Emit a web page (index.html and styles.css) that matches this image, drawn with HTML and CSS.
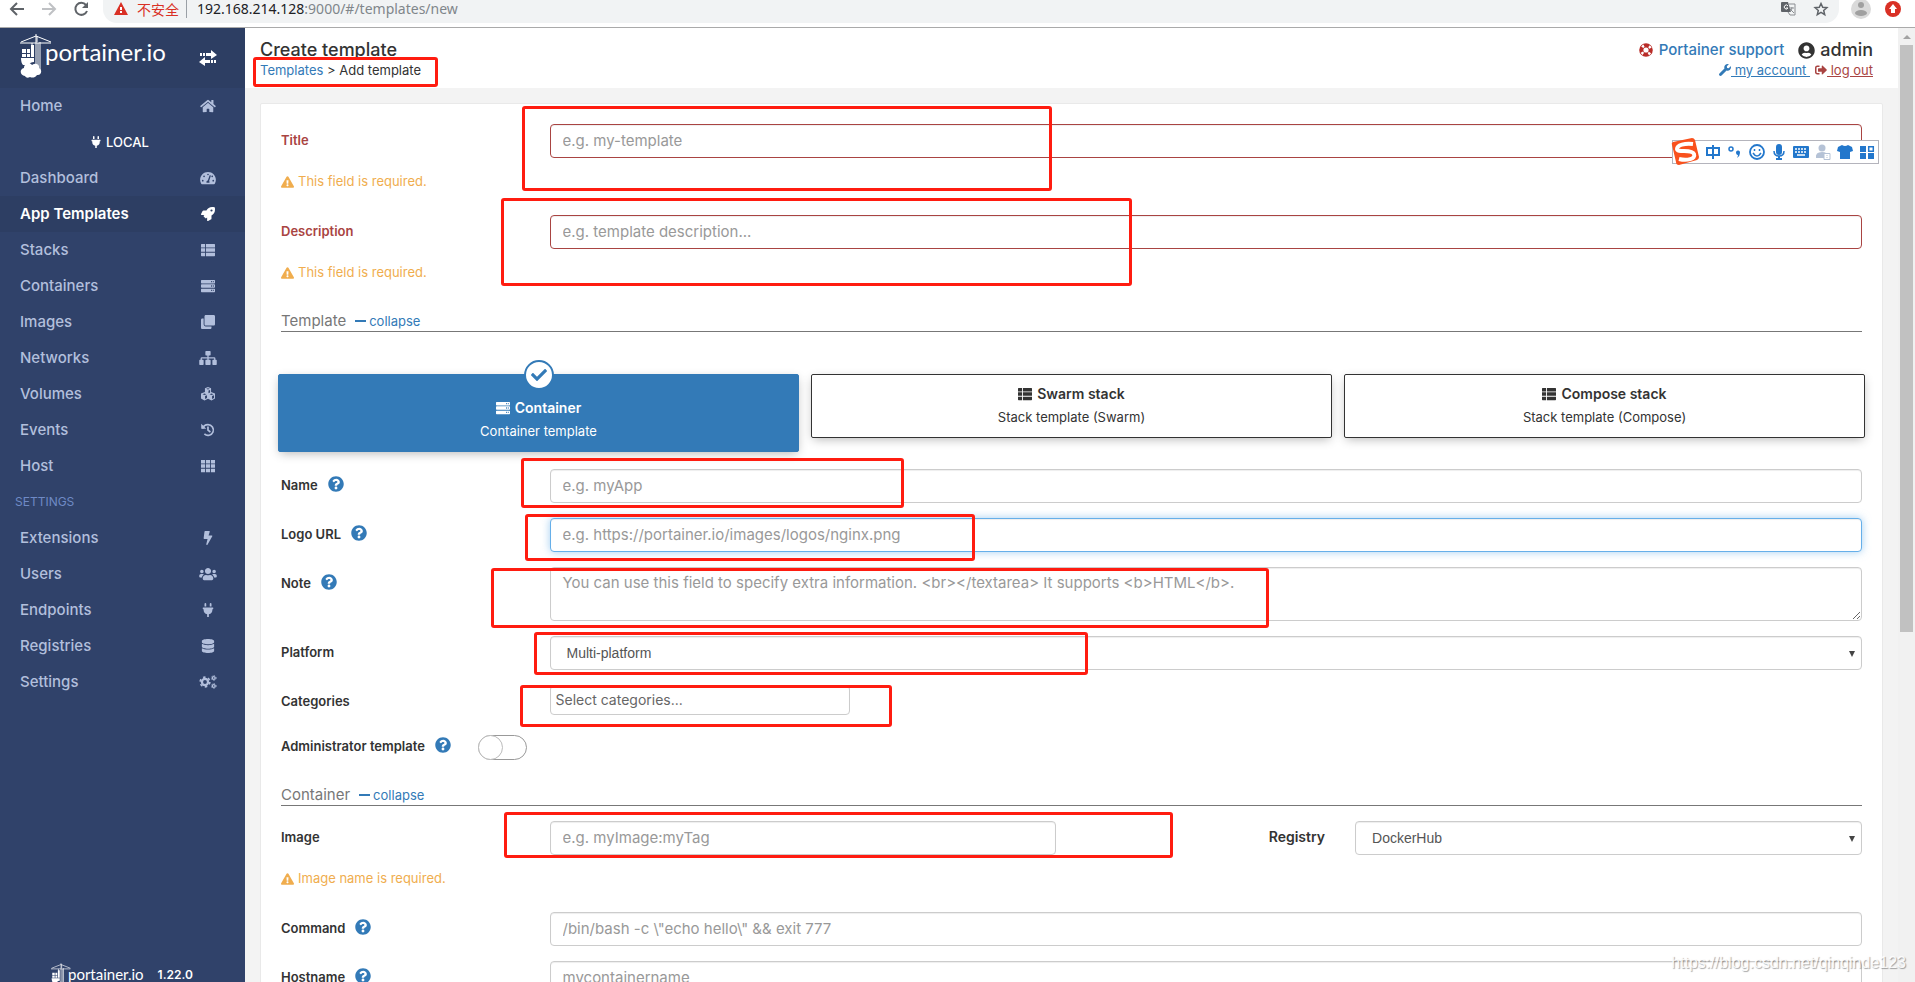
FILE: index.html
```html
<!DOCTYPE html>
<html lang="en">
<head>
<meta charset="utf-8">
<title>Portainer</title>
<link rel="stylesheet" href="styles.css">
</head>
<body>
<svg class="sprite" aria-hidden="true">
  <symbol id="home" viewBox="0 0 576 512"><path d="M280.37 148.26L96 300.11V464a16 16 0 0 0 16 16l112.06-.29a16 16 0 0 0 15.92-16V368a16 16 0 0 1 16-16h64a16 16 0 0 1 16 16v95.64a16 16 0 0 0 16 16.05L464 480a16 16 0 0 0 16-16V300L295.67 148.26a12.19 12.19 0 0 0-15.3 0zM571.6 251.47L488 182.56V44.05a12 12 0 0 0-12-12h-56a12 12 0 0 0-12 12v72.61L318.47 43a48 48 0 0 0-61 0L4.34 251.47a12 12 0 0 0-1.6 16.9l25.5 31A12 12 0 0 0 45.15 301l235.22-193.74a12.19 12.19 0 0 1 15.3 0L530.9 301a12 12 0 0 0 16.9-1.6l25.5-31a12 12 0 0 0-1.7-16.93z"/></symbol>
  <symbol id="gauge" viewBox="0 0 576 512"><path fill-rule="evenodd" d="M288 32C129 32 0 161 0 320c0 53 14 102 39 145 6 9 16 15 27 15h444c11 0 21-6 27-15 25-43 39-92 39-145C576 161 447 32 288 32zM288 96a30 30 0 1 1 0 60 30 30 0 0 1 0-60zM96 384a30 30 0 1 1 0-62 30 30 0 0 1 0 62zm48-160a30 30 0 1 1 0-62 30 30 0 0 1 0 62zm246-42l-62 184c16 17 22 40 13 60H235c-13-30 3-70 47-76l63-184c9-26 54-12 45 16zm48 42a30 30 0 1 1 8-60 30 30 0 0 1-8 60zm42 160a30 30 0 1 1 0-62 30 30 0 0 1 0 62z"/></symbol>
  <symbol id="rocket" viewBox="0 0 512 512"><path d="M505.05 19.1a15.89 15.89 0 0 0-12.2-12.2C460.65 0 435.46 0 410.36 0c-103.2 0-165.1 55.2-211.29 128H94.87A48 48 0 0 0 52 154.49l-49.42 98.8A24 24 0 0 0 24 288h103.77l-22.47 22.47a32 32 0 0 0 0 45.25l50.9 50.91a32 32 0 0 0 45.26 0L224 384.16V488a24 24 0 0 0 34.7 21.49l98.7-49.39a47.91 47.91 0 0 0 26.5-42.9V312.79c72.59-46.3 128-108.4 128-211.09.1-25.2.1-50.4-6.85-82.6zM384 168a40 40 0 1 1 40-40 40 40 0 0 1-40 40z"/></symbol>
  <symbol id="list" viewBox="0 0 512 512"><path d="M0 56q0-24 24-24h126v128H0zM182 32h306q24 0 24 24v104H182zM0 192h150v128H0zM182 192h330v128H182zM0 352h150v128H24q-24 0-24-24zM182 352h330v104q0 24-24 24H182z"/></symbol>
  <symbol id="server" viewBox="0 0 512 512"><path fill-rule="evenodd" d="M24 32h464q24 0 24 24v80q0 24-24 24H24q-24 0-24-24V56q0-24 24-24zm344 40v48h32V72zm64 0v48h32V72zM24 192h464q24 0 24 24v80q0 24-24 24H24q-24 0-24-24v-80q0-24 24-24zm344 40v48h32v-48zm64 0v48h32v-48zM24 352h464q24 0 24 24v80q0 24-24 24H24q-24 0-24-24v-80q0-24 24-24zm344 40v48h32v-48zm64 0v48h32v-48z"/></symbol>
  <symbol id="clone" viewBox="0 0 512 512"><path d="M464 0c26.5 0 48 21.500 48 48v288c0 26.500-21.500 48-48 48H176c-26.500 0-48-21.500-48-48V48c0-26.500 21.500-48 48-48h288M176 416c-44 0-80-36-80-80V128H48c-26.500 0-48 21.500-48 48v288c0 26.500 21.500 48 48 48h288c26.500 0 48-21.500 48-48v-48H176z"/></symbol>
  <symbol id="sitemap" viewBox="0 0 640 512"><path d="M248 0h144q24 0 24 24v112q0 24-24 24h-48v64h200q48 0 48 48v48h24q24 0 24 24v144q0 24-24 24H504q-24 0-24-24V344q0-24 24-24h40v-48H344v48h48q24 0 24 24v144q0 24-24 24H248q-24 0-24-24V344q0-24 24-24h48v-48H96v48h40q24 0 24 24v144q0 24-24 24H24q-24 0-24-24V344q0-24 24-24h24v-48q0-48 48-48h200v-64h-48q-24 0-24-24V24q0-24 24-24z"/></symbol>
  <symbol id="cubes" viewBox="0 0 512 512"><path fill-rule="evenodd" d="M256 0l112 42v140l144 56v180l-128 72-128-62-128 62L0 418V238l144-56V42zm0 42l-66 24 66 26 66-26zM274 130v94l58-26v-88zM128 234l-72 28 72 30 72-30zm256 0l-72 28 72 30 72-30zM148 332v104l72-34V302zm256 0v104l72-36v-98z"/></symbol>
  <symbol id="history" viewBox="0 0 512 512"><path d="M60 205C82 125 160 60 256 60a196 196 0 1 1-132 341" fill="none" stroke="currentColor" stroke-width="62"/><path d="M8 28v160q0 20 20 20h164L8 28zM224 128h62v116l76 62-38 48-100-78z"/></symbol>
  <symbol id="grid" viewBox="0 0 512 512"><path d="M0 32h150v128H0zM182 32h148v128H182zM362 32h150v128H362zM0 192h150v128H0zM182 192h148v128H182zM362 192h150v128H362zM0 352h150v128H0zM182 352h148v128H182zM362 352h150v128H362z"/></symbol>
  <symbol id="bolt" viewBox="0 0 320 512"><path d="M296 160H180.600l42.600-129.800C227.200 15 215.700 0 200 0H56C44 0 33.800 8.900 32.200 20.800l-32 240C-1.700 275.200 9.500 288 24 288h118.700L96.600 482.500c-3.600 15.200 8 29.500 23.300 29.500 8.400 0 16.400-4.400 20.800-12l176-304c9.300-15.900-2.200-36-20.700-36z"/></symbol>
  <symbol id="users" viewBox="0 0 640 512"><path d="M96 224c35.300 0 64-28.700 64-64s-28.700-64-64-64-64 28.700-64 64 28.700 64 64 64zm448 0c35.300 0 64-28.700 64-64s-28.700-64-64-64-64 28.700-64 64 28.700 64 64 64zm32 32h-64c-17.600 0-33.500 7.100-45.100 18.600 40.300 22.100 68.900 62 75.100 109.400h66c17.700 0 32-14.300 32-32v-32c0-35.300-28.700-64-64-64zm-256 0c61.900 0 112-50.100 112-112S381.900 32 320 32 208 82.100 208 144s50.100 112 112 112zm76.800 32h-8.300c-20.800 10-43.900 16-68.500 16s-47.600-6-68.500-16h-8.300C179.600 288 128 339.600 128 403.200V432c0 26.500 21.500 48 48 48h288c26.500 0 48-21.500 48-48v-28.800c0-63.600-51.600-115.200-115.200-115.200zm-223.700-13.400C161.500 263.100 145.600 256 128 256H64c-35.300 0-64 28.700-64 64v32c0 17.700 14.300 32 32 32h65.900c6.300-47.400 34.900-87.300 75.200-109.400z"/></symbol>
  <symbol id="plug" viewBox="0 0 384 512"><path d="M320,32a32,32,0,0,0-64,0v96h64Zm48,128H16A16,16,0,0,0,0,176v32a16,16,0,0,0,16,16H32v32A160.070,160.070,0,0,0,160,412.800V512h64V412.800A160.070,160.070,0,0,0,352,256V224h16a16,16,0,0,0,16-16V176A16,16,0,0,0,368,160ZM128,32a32,32,0,0,0-64,0v96h64Z"/></symbol>
  <symbol id="database" viewBox="0 0 448 512"><path d="M448 73.143v45.714C448 159.143 347.667 192 224 192S0 159.143 0 118.857V73.143C0 32.857 100.333 0 224 0s224 32.857 224 73.143zM448 176v102.857C448 319.143 347.667 352 224 352S0 319.143 0 278.857V176c48.125 33.143 136.208 48.572 224 48.572S399.874 209.143 448 176zm0 160v102.857C448 479.143 347.667 512 224 512S0 479.143 0 438.857V336c48.125 33.143 136.208 48.572 224 48.572S399.874 369.143 448 336z"/></symbol>
  <symbol id="cogs" viewBox="0 0 640 512"><g fill="none" stroke="currentColor"><circle cx="210" cy="256" r="112" stroke-width="84"/><circle cx="210" cy="256" r="176" stroke-width="60" stroke-dasharray="92 92"/><circle cx="530" cy="110" r="52" stroke-width="46"/><circle cx="530" cy="110" r="86" stroke-width="34" stroke-dasharray="45 45"/><circle cx="530" cy="402" r="52" stroke-width="46"/><circle cx="530" cy="402" r="86" stroke-width="34" stroke-dasharray="45 45"/></g></symbol>
  <symbol id="help" viewBox="0 0 512 512"><path d="M504 256c0 136.997-111.043 248-248 248S8 392.997 8 256C8 119.083 119.043 8 256 8s248 111.083 248 248zM262.655 90c-54.497 0-89.255 22.957-116.549 63.758-3.536 5.286-2.353 12.415 2.715 16.258l34.699 26.310c5.205 3.947 12.621 3.008 16.665-2.122 17.864-22.658 30.113-35.797 57.303-35.797 20.429 0 45.698 13.148 45.698 32.958 0 14.976-12.363 22.667-32.534 33.976C247.128 238.528 216 254.941 216 296v4c0 6.627 5.373 12 12 12h56c6.627 0 12-5.373 12-12v-1.333c0-28.462 83.186-29.647 83.186-106.667 0-58.002-60.165-102-116.531-102zM256 338c-25.365 0-46 20.635-46 46 0 25.364 20.635 46 46 46s46-20.636 46-46c0-25.365-20.635-46-46-46z"/></symbol>
  <symbol id="warn" viewBox="0 0 576 512"><path d="M569.517 440.013C587.975 472.007 564.806 512 527.940 512H48.054c-36.937 0-59.999-40.055-41.577-71.987L246.423 23.985c18.467-32.009 64.720-31.951 83.154 0l239.940 416.028zM288 354c-25.405 0-46 20.595-46 46s20.595 46 46 46 46-20.595 46-46-20.595-46-46-46zm-43.673-165.346l7.418 136c.347 6.364 5.609 11.346 11.982 11.346h48.546c6.373 0 11.635-4.982 11.982-11.346l7.418-136c.375-6.874-5.098-12.654-11.982-12.654h-63.383c-6.884 0-12.356 5.780-11.981 12.654z"/></symbol>
  <symbol id="user" viewBox="0 0 496 512"><path d="M248 8C111 8 0 119 0 256s111 248 248 248 248-111 248-248S385 8 248 8zm0 96c48.600 0 88 39.400 88 88s-39.400 88-88 88-88-39.400-88-88 39.400-88 88-88zm0 344c-58.700 0-111.300-26.600-146.500-68.200 18.800-35.400 55.600-59.800 98.500-59.800 2.400 0 4.800.400 7.100 1.100 13 4.200 26.600 6.900 40.900 6.900 14.300 0 28-2.700 40.900-6.900 2.300-.700 4.700-1.100 7.100-1.100 42.900 0 79.700 24.400 98.500 59.800C359.300 421.400 306.700 448 248 448z"/></symbol>
  <symbol id="wrench" viewBox="0 0 512 512"><path d="M507.730 109.100c-2.240-9.030-13.540-12.090-20.120-5.510l-74.360 74.360-67.880-11.310-11.310-67.880 74.360-74.360c6.620-6.620 3.430-17.900-5.660-20.160-47.380-11.740-99.550.910-136.580 37.930-39.640 39.640-50.550 97.100-34.050 147.200L18.740 402.760c-24.990 24.990-24.990 65.510 0 90.500 24.990 24.990 65.510 24.990 90.500 0l213.210-213.210c50.120 16.710 107.470 5.680 147.370-34.220 37.070-37.070 49.700-89.320 37.910-136.730z"/></symbol>
  <symbol id="logout" viewBox="0 0 512 512"><path d="M497 273L329 441c-15 15-41 4.500-41-17v-96H152c-13.300 0-24-10.700-24-24v-96c0-13.300 10.700-24 24-24h136V88c0-21.400 25.900-32 41-17l168 168c9.300 9.400 9.300 24.600 0 34zM192 436v-40c0-6.600-5.400-12-12-12H96c-17.700 0-32-14.300-32-32V160c0-17.700 14.300-32 32-32h84c6.600 0 12-5.400 12-12V76c0-6.600-5.400-12-12-12H96c-53 0-96 43-96 96v192c0 53 43 96 96 96h84c6.600 0 12-5.400 12-12z"/></symbol>
  <symbol id="check" viewBox="0 0 512 512"><path d="M173.898 439.404l-166.400-166.400c-9.997-9.997-9.997-26.206 0-36.204l36.203-36.204c9.997-9.998 26.207-9.998 36.204 0L192 312.690 432.095 72.596c9.997-9.997 26.207-9.997 36.204 0l36.203 36.204c9.997 9.997 9.997 26.206 0 36.204l-294.400 294.401c-9.998 9.997-26.207 9.997-36.204-.001z"/></symbol>
  <symbol id="lifering" viewBox="0 0 14 14"><circle cx="7" cy="7" r="4.700" fill="none" stroke="#b92c28" stroke-width="4.200"/><circle cx="7" cy="7" r="4.700" fill="none" stroke="#fff" stroke-width="2.600" stroke-dasharray="2.200 5.180" stroke-dashoffset="-2.600"/></symbol>
  <symbol id="crane" viewBox="0 0 32 44"><g fill="none" stroke="#fff"><path d="M0 9h31M1 8L16 2l15 6M16 0v30M20 8v28M17 2v6M12 9v5"/><path d="M18 9v27" stroke-width="1"/></g><path fill="#fff" d="M11 11h3v4h-3zM2 15h4v4H2zM7 15h3v4H7zM2 20h4v3H2zM7 20h3v3H7zM11 15h3v8h-3zM1 24h13v4q-4 0-5 3H3q-2-2-2-7z"/><path fill="#fff" d="M5 42c-5 0-6-7-1-8 0-5 6-6 8-3 4-3 8 0 7 3 4 2 2 8-2 7-2 3-5 3-7 2-2 1-4 1-5-1z"/></symbol>
</svg>

<div class="window">
  <header class="browser">
    <svg class="nav-arrows" viewBox="0 0 90 20"><g fill="none" stroke-width="2"><path stroke="#5f6368" d="M24 9H11M17 3l-6 6 6 6"/><path stroke="#bfc1c4" d="M42 9h13M49 3l6 6-6 6"/><path stroke="#5f6368" d="M87 11a6 6 0 1 1-1-6"/></g><path fill="#5f6368" d="M88 2v6h-6z"/></svg>
    <div class="address">
      <svg class="alert" viewBox="0 0 14 13"><path fill="#d93025" d="M7 0l7 13H0z"/><path fill="#fff" d="M6 5h2v3H6zM6 9h2v2H6z"/></svg>
      <span class="unsafe">不安全</span>
      <span class="url"><b>192.168.214.128</b>:9000/#/templates/new</span>
      <svg class="translate" viewBox="0 0 15 15"><path fill="#5f6368" d="M1 1h6l3 10H1q-1 0-1-1V2q0-1 1-1z"/><path fill="none" stroke="#8a8d91" d="M8 3h6v11H9l-2-3M8 7h5M11 6q0 3-2 5M9 8l4 4"/><path fill="none" stroke="#fff" d="M7 5a2 2 0 1 0 0 2H5"/></svg>
      <svg class="star" viewBox="0 0 14 14"><path fill="none" stroke="#5f6368" stroke-width="1.500" d="M7 1.500l1.700 3.800 4.200.4-3.200 2.800 1 4.100L7 10.400l-3.700 2.200 1-4.100L1.100 5.700l4.200-.4z"/></svg>
    </div>
    <svg class="avatar" viewBox="0 0 20 20"><circle cx="10" cy="10" r="10" fill="#dadada"/><circle cx="10" cy="6" r="3" fill="#a0a0a0"/><ellipse cx="10" cy="14" rx="6" ry="3" fill="#a0a0a0"/></svg>
    <svg class="update" viewBox="0 0 16 16"><circle cx="8" cy="8" r="8" fill="#d93025"/><path fill="#fff" d="M8 3l4 5h-2v4H6V8H4z"/></svg>
  </header>

  <div class="app">
    <nav class="sidebar">
      <div class="brand">
        <svg class="crane"><use href="#crane"/></svg>
        <span class="brand-name">portainer.io</span>
        <svg class="toggle-menu" viewBox="0 0 18 16"><path fill="#fff" d="M1 3h2v3H1zM4 3h2v3H4zM7 3h5V0l6 5-6 4V6H7zM17 10h-2v3h2zM14 10h-2v3h2zM11 10H6V7l-6 5 6 4v-3h5z"/></svg>
      </div>
      <a class="item" href="#">Home<svg><use href="#home"/></svg></a>
      <div class="endpoint"><svg><use href="#plug"/></svg>LOCAL</div>
      <a class="item" href="#">Dashboard<svg><use href="#gauge"/></svg></a>
      <a class="item active" href="#">App Templates<svg><use href="#rocket"/></svg></a>
      <a class="item" href="#">Stacks<svg><use href="#list"/></svg></a>
      <a class="item" href="#">Containers<svg><use href="#server"/></svg></a>
      <a class="item" href="#">Images<svg><use href="#clone"/></svg></a>
      <a class="item" href="#">Networks<svg><use href="#sitemap"/></svg></a>
      <a class="item" href="#">Volumes<svg><use href="#cubes"/></svg></a>
      <a class="item" href="#">Events<svg><use href="#history"/></svg></a>
      <a class="item" href="#">Host<svg><use href="#grid"/></svg></a>
      <div class="nav-title">SETTINGS</div>
      <a class="item" href="#">Extensions<svg><use href="#bolt"/></svg></a>
      <a class="item" href="#">Users<svg><use href="#users"/></svg></a>
      <a class="item" href="#">Endpoints<svg><use href="#plug"/></svg></a>
      <a class="item" href="#">Registries<svg><use href="#database"/></svg></a>
      <a class="item" href="#">Settings<svg><use href="#cogs"/></svg></a>
      <div class="side-foot"><svg class="crane-small"><use href="#crane"/></svg><span class="foot-name">portainer.io</span><span class="version">1.22.0</span></div>
    </nav>

    <main class="content">
      <header class="page-head">
        <div>
          <h1>Create template</h1>
          <div class="crumbs"><a href="#">Templates</a> &gt; Add template</div>
        </div>
        <div class="account">
          <div class="account-top"><a class="support" href="#"><svg><use href="#lifering"/></svg>Portainer support</a><span class="admin"><svg><use href="#user"/></svg>admin</span></div>
          <div class="account-links"><a class="mine" href="#"><svg><use href="#wrench"/></svg><span>&nbsp;my account&nbsp;</span></a><a class="leave" href="#"><svg><use href="#logout"/></svg><span>&nbsp;log out</span></a></div>
        </div>
      </header>

      <form class="card">
        <div class="row invalid"><label class="c2" for="title">Title</label><div class="c10"><input id="title" type="text" placeholder="e.g. my-template"></div></div>
        <p class="warning"><svg><use href="#warn"/></svg>This field is required.</p>
        <div class="row invalid"><label class="c2" for="desc">Description</label><div class="c10"><input id="desc" type="text" placeholder="e.g. template description..."></div></div>
        <p class="warning"><svg><use href="#warn"/></svg>This field is required.</p>

        <h2>Template<a href="#"><i></i>collapse</a></h2>

        <div class="boxes">
          <button type="button" class="box selected"><span class="tick"><svg><use href="#check"/></svg></span><strong><svg><use href="#server"/></svg>Container</strong><span>Container template</span></button>
          <button type="button" class="box"><strong><svg><use href="#list"/></svg>Swarm stack</strong><span>Stack template (Swarm)</span></button>
          <button type="button" class="box"><strong><svg><use href="#list"/></svg>Compose stack</strong><span>Stack template (Compose)</span></button>
        </div>

        <div class="row"><label class="c2" for="name">Name<svg><use href="#help"/></svg></label><div class="c10"><input id="name" type="text" placeholder="e.g. myApp"></div></div>
        <div class="row"><label class="c2" for="logo">Logo URL<svg><use href="#help"/></svg></label><div class="c10"><input id="logo" class="focused" type="text" placeholder="e.g. https://portainer.io/images/logos/nginx.png"></div></div>
        <div class="row"><label class="c2" for="note">Note<svg><use href="#help"/></svg></label><div class="c10"><textarea id="note" placeholder="You can use this field to specify extra information. &lt;br&gt;&lt;/textarea&gt; It supports &lt;b&gt;HTML&lt;/b&gt;."></textarea></div></div>
        <div class="row"><label class="c2" for="platform">Platform</label><div class="c10 select"><select id="platform"><option>Multi-platform</option></select></div></div>
        <div class="row"><label class="c2" for="cats">Categories</label><div class="c10"><input id="cats" class="multi" type="text" placeholder="Select categories..."></div></div>
        <div class="row admin-row"><label for="adm">Administrator template<svg><use href="#help"/></svg></label><input id="adm" class="switch" type="checkbox"></div>

        <h2>Container<a href="#"><i></i>collapse</a></h2>

        <div class="row image-row"><label class="c2" for="image">Image</label><div class="c4"><input id="image" type="text" placeholder="e.g. myImage:myTag"></div><label class="c2 end" for="registry">Registry</label><div class="c4 select"><select id="registry"><option>DockerHub</option></select></div></div>
        <p class="warning"><svg><use href="#warn"/></svg>Image name is required.</p>
        <div class="row"><label class="c2" for="cmd">Command<svg><use href="#help"/></svg></label><div class="c10"><input id="cmd" type="text" placeholder="/bin/bash -c \&quot;echo hello\&quot; &amp;&amp; exit 777"></div></div>
        <div class="row"><label class="c2" for="host">Hostname<svg><use href="#help"/></svg></label><div class="c10"><input id="host" type="text" placeholder="mycontainername"></div></div>
      </form>
    </main>

    <div class="scrollbar"><i class="up"></i><i class="thumb"></i></div>
  </div>
</div>

<div class="mark m1"></div><div class="mark m2"></div><div class="mark m3"></div><div class="mark m4"></div><div class="mark m5"></div><div class="mark m6"></div><div class="mark m7"></div><div class="mark m8"></div><div class="mark m9"></div>

<div class="ime">
  <svg class="ime-logo" viewBox="0 0 28 28"><path fill="#f9511d" d="M1 7Q0 5 2 4L21 0q2 0 3 2l4 17q0 2-2 3L8 27q-3 0-3-3z"/><path fill="none" stroke="#fff" stroke-width="4" d="M22 6C14 5 6 7 6 11s15 0 17 5-7 7-15 5"/></svg>
  <svg viewBox="0 0 16 16"><path fill="none" stroke="#2277cc" stroke-width="2" d="M2 4h12v7H2zM8 1v14"/></svg>
  <svg viewBox="0 0 16 16"><circle cx="4" cy="5" r="2" fill="none" stroke="#2277cc" stroke-width="1.500"/><path fill="#2277cc" d="M9 8a2 2 0 1 1 4 1q0 3-3 5 1-2 1-3-2 0-2-3z"/></svg>
  <svg viewBox="0 0 16 16"><g fill="none" stroke="#2277cc"><circle cx="8" cy="8" r="7" stroke-width="1.800"/><path stroke-width="1.500" d="M4 9q4 6 8 0M5.500 5v2M10.500 5v2"/></g></svg>
  <svg viewBox="0 0 16 16"><path fill="#2277cc" d="M5 3a3 3 0 0 1 6 0v5a3 3 0 0 1-6 0zM5 14h6v2H5zM7 12h2v3H7z"/><path fill="none" stroke="#2277cc" stroke-width="1.500" d="M3 7q0 5 5 5t5-5"/></svg>
  <svg viewBox="0 0 16 16"><rect y="2" width="16" height="12" rx="1" fill="#2277cc"/><path stroke="#fff" stroke-width="1.500" d="M2 5h12M2 8h12" stroke-dasharray="2 1"/><path stroke="#fff" stroke-width="1.500" d="M4 11h8"/></svg>
  <svg viewBox="0 0 16 16"><g fill="#b5c2d6"><circle cx="7" cy="4" r="3.500"/><path d="M1 14q-1-6 6-6 3 0 4 1H9v5z"/></g><path fill="#fff" stroke="#b5c2d6" d="M9 9.500h6v6H9z"/><path stroke="#b5c2d6" d="M12 11v1M12 13v1"/></svg>
  <svg viewBox="0 0 16 16"><path fill="#2277cc" d="M5 1q3 2 6 0l4 2 1 4-3 1v7H3V8L0 7l1-4z"/></svg>
  <svg viewBox="0 0 16 16"><path fill="#2277cc" d="M1 2h6v6H1zM1 9h6v6H1zM9 9h6v6H9z"/><path fill="none" stroke="#2277cc" stroke-width="1.500" d="M9.700 2.700h4.600v4.600H9.700z"/></svg>
</div>
<div class="watermark">https://blog.csdn.net/qinqinde123</div>
</body>
</html>
```
FILE: styles.css
```css
* { box-sizing: border-box; }
body { margin: 0; font: 13px/18px Inter, "Liberation Sans", sans-serif; color: #333; background: #f3f3f3; overflow: hidden; }
svg { fill: currentColor; flex: none; overflow: visible; }
a { color: #337ab7; text-decoration: none; }
.sprite { position: absolute; width: 0; height: 0; }
.window { height: 100vh; display: flex; flex-direction: column; overflow: hidden; }

.browser { flex: none; height: 28px; display: flex; align-items: flex-start; background: #fff; border-bottom: 1px solid #aaa; }
.nav-arrows { width: 90px; height: 20px; }
.address { flex: 1; display: flex; align-items: center; height: 23px; margin-left: 13px; padding: 0 11px 6px 11px; background: #f1f3f4; border-radius: 0 0 14px 14px; }
.alert { width: 14px; height: 13px; margin-right: 9px; }
.unsafe { font: 14px/18px "Noto Sans CJK SC", sans-serif; color: #d93025; padding-right: 7px; border-right: 1px solid #9aa0a6; }
.url { flex: 1; margin-left: 10px; font: 14px/18px "Noto Sans", sans-serif; color: #80868b; }
.url b { font-weight: 400; color: #202124; }
.translate { width: 15px; height: 15px; margin-right: 18px; }
.star { width: 14px; height: 14px; }
.avatar { width: 20px; height: 20px; margin: -1px 14px 0 12px; }
.update { width: 16px; height: 16px; margin: 1px 14px 0 0; }

.app { flex: 1; min-height: 0; display: flex; }
.sidebar { flex: none; width: 245px; display: flex; flex-direction: column; background: #30426a; color: #b2bfdc; font-size: 15px; font-weight: 500; }
.brand { height: 60px; display: flex; align-items: flex-start; padding: 6px 28px 0 20px; background: #2d3e63; color: #fff; }
.crane { width: 32px; height: 44px; }
.brand-name { flex: 1; margin-left: -7px; font: 24px/36px Lato, sans-serif; }
.toggle-menu { width: 18px; height: 16px; margin-top: 16px; }
.item { height: 36px; display: flex; align-items: center; justify-content: space-between; padding: 0 27px 1px 20px; color: #b2bfdc; }
.item svg { width: 20px; height: 14px; }
.item.active { background: #2d3e63; color: #fff; font-weight: 600; }
.endpoint { height: 36px; display: flex; align-items: center; justify-content: center; gap: 5px; padding: 0 5px 1px 0; font-size: 13px; color: #fff; }
.endpoint svg { width: 10px; height: 12px; }
.nav-title { height: 36px; padding-left: 15px; line-height: 36px; font-size: 12px; font-weight: 400; color: #6f8ac5; }
.side-foot { height: 19px; margin-top: auto; display: flex; padding-left: 51px; color: #fff; }
.crane-small { width: 20px; height: 28px; }
.foot-name { margin-left: -3px; font: 15px/22px Lato, sans-serif; }
.version { margin-left: 14px; line-height: 24px; font-size: 12px; font-weight: 600; }

.content { flex: 1; min-width: 0; overflow: hidden; }
.page-head { height: 60px; display: flex; justify-content: space-between; padding: 11px 25px 0 15px; background: #fff; }
h1 { margin: 0; font-size: 18px; line-height: 22px; font-weight: 500; }
.crumbs { line-height: 18px; }
.account { text-align: right; }
.account-top, .support, .admin, .account-links, .account-links a { display: flex; align-items: center; justify-content: flex-end; }
.account-top { height: 22px; }
.support { font-size: 15px; font-weight: 500; gap: 6px; margin-right: 14px; }
.support svg { width: 14px; height: 14px; }
.admin { font-size: 18px; font-weight: 500; gap: 5px; }
.admin svg { width: 17px; height: 17px; }
.account-links { height: 18px; gap: 5px; }
.account-links svg { width: 12px; height: 12px; }
.account-links span { text-decoration: underline; }
.leave { color: #a94442; }

.card { margin: 15px 15px 0 15px; padding: 20px; background: #fff; border: 1px solid #e9e9e9; border-radius: 2px; }
.row { display: flex; align-items: flex-start; min-height: 34px; margin: 0 -15px 15px; }
.c2, .c4, .c10 { flex: none; padding: 0 15px; }
.c2 { width: 16.6667%; }
.c4 { width: 33.3333%; }
.c10 { width: 83.3333%; }
.image-row .end { text-align: right; margin-left: auto; font-size: 14px; }
.row > label { padding-top: 7px; font-weight: 600; white-space: nowrap; }
label svg { width: 16px; height: 16px; margin-left: 10px; vertical-align: -2px; color: #337ab7; }
.invalid label { color: #a94442; }
.row input[type=text], textarea, select { display: block; width: 100%; height: 34px; padding: 5px 12px 7px; font: 15px/20px Inter, sans-serif; color: #555; background: #fff; border: 1px solid #ccc; border-radius: 4px; outline: 0; box-shadow: inset 0 1px 1px rgba(0,0,0,.07); }
::placeholder { color: #999; opacity: 1; }
.row.invalid input[type=text] { border-color: #a94442; }
.row input[type=text].focused { border-color: #66afe9; box-shadow: inset 0 1px 1px rgba(0,0,0,.07), 0 0 8px rgba(102,175,233,.6); }
textarea { height: 54px; resize: vertical; }
.row select { appearance: none; padding: 6px 16px; font: 14px/20px "Liberation Sans", sans-serif; }
.select { position: relative; }
.select::after { content: ""; position: absolute; right: 22px; top: 15px; border: solid transparent; border-width: 6px 3px 0; border-top-color: #444; }
.row input[type=text].multi { width: 300px; height: 30px; padding: 0 5px 2px; font-size: 14px; }
.row .multi::placeholder { color: #666; }
.warning { display: flex; align-items: center; gap: 4px; margin: 0 0 25px; line-height: 17px; color: #f0ad4e; }
.warning svg { width: 13px; height: 12px; }
h2 { margin: 0 0 15px; padding-top: 5px; font-size: 15px; line-height: 20px; font-weight: 400; color: #777; border-bottom: 1px solid #777; }
h2 a { font-size: 13px; margin-left: 9px; }
h2 i { display: inline-block; width: 11px; height: 2px; margin-right: 3px; vertical-align: 4px; background: #337ab7; }

.boxes { display: grid; grid-template-columns: repeat(3, 1fr); align-items: start; gap: 12px; margin: 42px -3px 17px; }
.box { position: relative; display: flex; flex-direction: column; align-items: center; height: 64px; padding: 10px 0 0; font: 13px/18px Inter, sans-serif; color: #333; background: #fff; border: 1px solid #333; border-radius: 2px; box-shadow: 0 3px 10px -2px rgba(0,0,0,.3); }
.box strong { display: flex; align-items: center; gap: 5px; margin-bottom: 5px; font-size: 14px; font-weight: 600; }
.box strong svg { width: 14px; height: 14px; }
.box.selected { height: 78px; padding-top: 24px; color: #fff; background: #337ab7; border-color: #337ab7; }
.tick { position: absolute; left: 50%; top: -15px; width: 30px; height: 30px; margin-left: -15px; display: grid; place-items: center; background: #fff; border: 2px solid #337ab7; border-radius: 50%; color: #337ab7; }
.tick svg { width: 16px; height: 16px; }

.row.admin-row { min-height: 26px; margin-bottom: 20px; padding-left: 15px; }
.row.admin-row > label { padding-top: 3px; }
.switch { appearance: none; width: 49px; height: 25px; margin: 1px 0 0 27px; border: 1px solid #999; border-radius: 13px; background: #fff; }
.switch::before { content: ""; display: block; width: 25px; height: 25px; margin: -1px; border: 1px solid #bbb; border-radius: 50%; background: #fff; box-sizing: border-box; }

.scrollbar { flex: none; width: 17px; padding: 7px 2px 0; background: #f1f1f1; }
.scrollbar i { display: block; }
.up { width: 0; margin: 0 auto 6px; border: solid transparent; border-width: 0 4px 4px; border-bottom-color: #a3a3a3; }
.thumb { height: 62%; background: #c1c1c1; }

.mark { position: absolute; border: 3px solid #ff1c10; border-radius: 3px; }
.m1 { left: 253px; top: 57px; width: 185px; height: 30px; }
.m2 { left: 522px; top: 106px; width: 530px; height: 85px; }
.m3 { left: 501px; top: 198px; width: 631px; height: 88px; }
.m4 { left: 521px; top: 458px; width: 383px; height: 50px; }
.m5 { left: 525px; top: 514px; width: 450px; height: 47px; }
.m6 { left: 491px; top: 568px; width: 778px; height: 60px; }
.m7 { left: 534px; top: 632px; width: 554px; height: 43px; }
.m8 { left: 520px; top: 685px; width: 372px; height: 42px; }
.m9 { left: 504px; top: 812px; width: 669px; height: 46px; }

.ime { position: absolute; right: 36px; top: 140px; height: 24px; display: flex; align-items: center; gap: 6px; padding-right: 3px; background: #fff; border: 1px solid #b4b4bc; }
.ime svg { width: 16px; height: 16px; }
.ime .ime-logo { width: 28px; height: 28px; margin-left: -2px; }
.watermark { position: absolute; right: 9px; bottom: 8px; font: 16px/22px "Liberation Sans", sans-serif; color: rgba(255,255,255,.9); text-shadow: 1px 1px 1px rgba(0,0,0,.35); }
```
